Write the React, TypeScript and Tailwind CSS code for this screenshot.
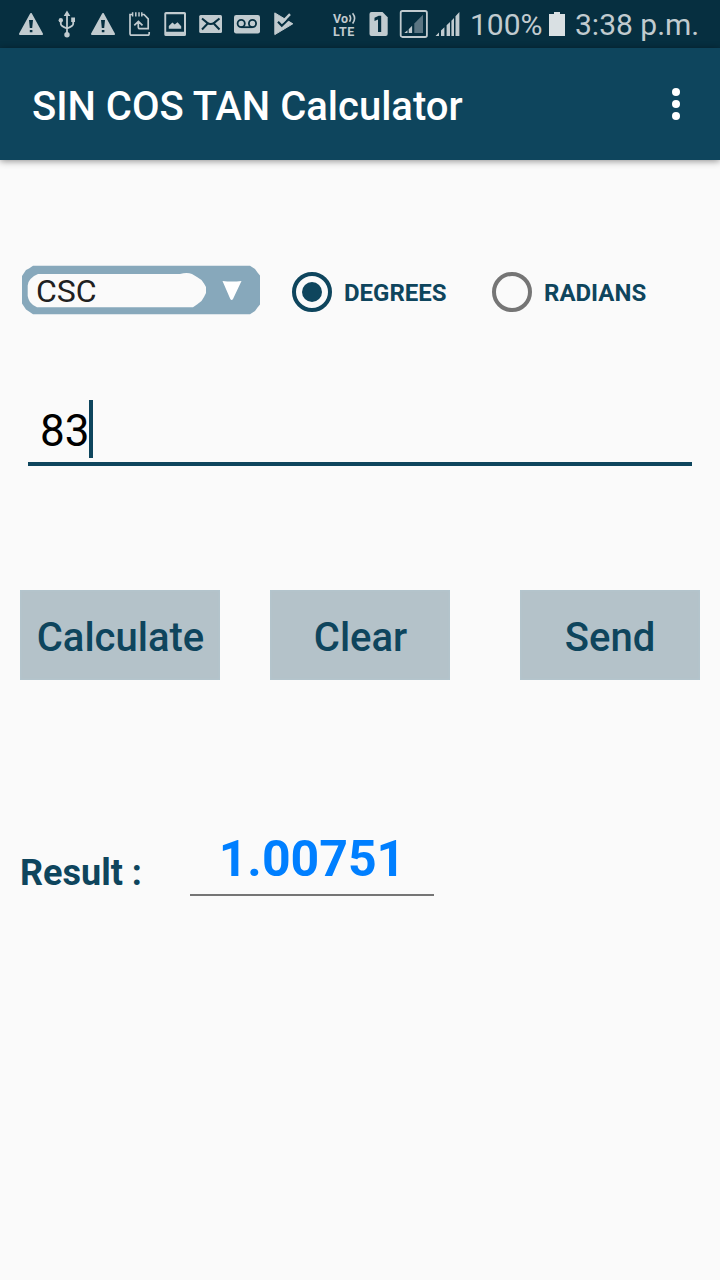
import { useState } from "react"
import type { ReactNode } from "react"

const Slot = ({ children }: { children: ReactNode }) => (
  <svg width="36" height="48" viewBox="0 0 36 48" fill="none" className="shrink-0">
    {children}
  </svg>
)

const WarningIcon = () => (
  <Slot>
    <path d="M18 14 L29 34 H7 Z" fill="#c1cbcf" stroke="#c1cbcf" strokeWidth="2" strokeLinejoin="round" />
    <path d="M16 20 H20 L19.2 28 H16.8 Z M16.8 30 H19.4 V32.2 H16.8 Z" fill="#062f40" />
  </Slot>
)

const UsbIcon = () => (
  <Slot>
    <path d="M18 13 V34 M11.8 20 V24 Q11.8 26 18 28.5 M24.2 20 V24 Q24.2 26 18 28.5" stroke="#c1cbcf" strokeWidth="1.8" />
    <path d="M18 10.5 L21.3 16 H14.7 Z M22.2 17.6 H26 V22 H22.2 Z" fill="#c1cbcf" />
    <circle cx="11.8" cy="20.2" r="2.2" fill="#c1cbcf" />
    <circle cx="18" cy="34.8" r="2.7" fill="#c1cbcf" />
  </Slot>
)

const SdCardIcon = () => (
  <Slot>
    <path
      d="M11 14.5 H9 V33.5 Q9 35.2 10.7 35.2 H26.5 Q28.2 35.2 28.2 33.5 V32 M21 14.5 H23 L27.2 18.8 V28.7 H19 Q17.3 28.7 17.3 27 V22 M13.3 25.4 L17.4 21.4 L21.5 25.4"
      stroke="#c1cbcf"
      strokeWidth="1.7"
    />
    <path d="M11.6 12.2 V16.6 M14.8 12.2 V16.6 M18 12.2 V16.6 M20.8 12.2 V16.6" stroke="#c1cbcf" strokeWidth="1.5" />
  </Slot>
)

const PictureIcon = () => (
  <Slot>
    <path fillRule="evenodd" d="M9 12 H27.5 Q29 12 29 13.5 V34.5 Q29 36 27.5 36 H9 Q7.3 36 7.3 34.5 V13.5 Q7.3 12 9 12 Z M9.2 14.2 V31.7 H27 V14.2 Z" fill="#c1cbcf" />
    <path d="M11.8 28.7 V26 L15.4 22.5 L17.7 24.5 L20.5 22.3 L24.2 26.2 V28.7 Z" fill="#c1cbcf" />
  </Slot>
)

const MailIcon = () => (
  <Slot>
    <rect x="6.2" y="15" width="22.8" height="18" rx="1.5" fill="#c1cbcf" />
    <path d="M9 18.5 L14 22.6 Q17.7 25.4 21.4 22.6 L26.5 18.5 M9 29.5 L14.5 23.8 M26.5 29.5 L21 23.8" stroke="#062f40" strokeWidth="2" />
  </Slot>
)

const VoicemailIcon = () => (
  <Slot>
    <rect x="5" y="15" width="26" height="18.5" rx="2.2" fill="#c1cbcf" />
    <circle cx="12.2" cy="23.5" r="3.6" stroke="#062f40" strokeWidth="1.8" />
    <circle cx="23.5" cy="23.5" r="3.6" stroke="#062f40" strokeWidth="1.8" />
    <path d="M12.2 27.2 H23.5" stroke="#062f40" strokeWidth="1.8" />
  </Slot>
)

const PlayCheckIcon = () => (
  <Slot>
    <path d="M9.8 12.9 L27.8 23.8 L9.8 34.6 Z" fill="#c1cbcf" stroke="#c1cbcf" strokeWidth="1" strokeLinejoin="round" />
    <path d="M13 21.8 L16.8 25.8 L26 16.8" stroke="#062f40" strokeWidth="2.2" />
    <path d="M16.8 22.6 L25 14.2" stroke="#c1cbcf" strokeWidth="2.4" />
  </Slot>
)

const VolteIcon = () => (
  <div className="ml-[32px] flex h-12 w-[26px] shrink-0 flex-col pt-[12px]">
    <div className="flex h-[13px] items-start">
      <span className="w-[15px] text-[12.5px] leading-[13px] font-bold">Vo</span>
      <svg width="9" height="12" viewBox="0 0 9 12" fill="none" className="shrink-0">
        <path d="M1.5 3 Q3.7 6.3 1.5 9.8 M4.6 1.2 Q8.6 6.3 4.6 11.6" stroke="#c1cbcf" strokeWidth="1.6" />
      </svg>
    </div>
    <span className="text-[12.5px] leading-[13px] font-bold tracking-[0.6px] whitespace-nowrap">LTE</span>
  </div>
)

const SimIcon = () => (
  <svg width="20" height="48" viewBox="0 0 20 48" className="ml-[10px] shrink-0">
    <path d="M2.5 12 H13.5 L18.7 17.2 V34 Q18.7 36 16.7 36 H2.5 Q.5 36 .5 34 V14 Q.5 12 2.5 12 Z" fill="#c1cbcf" />
    <path d="M5.5 17.8 L9.7 15.8 H12.2 V32 H9 V19.6 L5.5 21 Z" fill="#062f40" />
  </svg>
)

const BoxedSignalIcon = () => (
  <svg width="30" height="48" viewBox="0 0 30 48" className="ml-[10px] shrink-0">
    <rect x="1.7" y="11" width="26.2" height="26" rx="1.8" fill="none" stroke="#c1cbcf" strokeWidth="1.8" />
    <path d="M15.3 23.5 L24 14.8 V33 H15.3 Z" fill="#5b7582" />
    <path d="M5.3 33 L8.5 30.2 V33 Z M9.7 29.2 L13.1 25.8 V33 H9.7 Z" fill="#c1cbcf" />
  </svg>
)

const SignalIcon = () => (
  <svg width="26" height="48" viewBox="0 0 26 48" className="ml-[6px] shrink-0">
    <path
      d="M.5 36 L4 32.5 V36 Z M6 30.5 L9.4 27.2 V36 H6 Z M11.6 25.3 L15 22 V36 H11.6 Z M16.4 20.7 V36 H19 V18.1 Z M20.5 16.3 L24.4 12 V36 H20.5 Z"
      fill="#c1cbcf"
    />
  </svg>
)

const StatusBar = () => (
  <div className="flex h-12 items-center bg-[#062f40] pl-[13px] text-[30px] leading-none text-[#c1cbcf]">
    <WarningIcon />
    <UsbIcon />
    <WarningIcon />
    <SdCardIcon />
    <PictureIcon />
    <MailIcon />
    <VoicemailIcon />
    <PlayCheckIcon />
    <VolteIcon />
    <SimIcon />
    <BoxedSignalIcon />
    <SignalIcon />
    <span className="ml-[9px] w-[78px] pt-[2px] whitespace-nowrap">100%</span>
    <svg width="16" height="48" viewBox="0 0 16 48" className="ml-px shrink-0">
      <path d="M5 12 H11 V14 H16 V36 H0 V14 H5 Z" fill="#d9e0e3" />
    </svg>
    <span className="ml-[10px] pt-[2px] whitespace-nowrap">3:38 p.m.</span>
  </div>
)

type RadioProps = {
  label: string
  checked: boolean
  onSelect: () => void
}

const Radio = ({ label, checked, onSelect }: RadioProps) => (
  <button role="radio" aria-checked={checked} onClick={onSelect} className="flex w-[200px] items-center gap-3">
    <span
      className={`flex h-10 w-10 shrink-0 items-center justify-center rounded-full border-4 ${
        checked ? "border-[#0e455d]" : "border-[#757575]"
      }`}
    >
      {checked && <span className="h-5 w-5 rounded-full bg-[#0e455d]" />}
    </span>
    <span className="pt-[2px] text-[24px] leading-none font-bold text-[#0e455d]">{label}</span>
  </button>
)

const buttonClass =
  "h-[90px] bg-[#b4c2c9] pt-[5px] text-[40px] leading-none font-medium text-[#0e455d] shadow-[inset_0_0_3px_#b2c8d2]"

export default function App() {
  const [unit, setUnit] = useState("DEGREES")
  const [value, setValue] = useState("83")

  return (
    <div className="flex h-[1280px] w-[720px] flex-col overflow-hidden bg-[#fafafa] font-[Roboto,sans-serif]">
      <StatusBar />
      <header className="flex h-28 shrink-0 items-center justify-between bg-[#0e455d] pr-10 pl-8 shadow-[0_1px_7px_rgba(0,0,0,0.45)]">
        <h1 className="pt-[5px] text-[40px] leading-none font-medium text-white">SIN COS TAN Calculator</h1>
        <svg width="8" height="32" viewBox="0 0 8 32" fill="#fff">
          <circle cx="4" cy="4" r="4" />
          <circle cx="4" cy="16" r="4" />
          <circle cx="4" cy="28" r="4" />
        </svg>
      </header>

      <main className="flex flex-col">
        <div className="mt-[105px] ml-[22px] flex h-[50px] items-center">
          {/* Function picker */}
          <button className="relative h-[50px] w-[238px] text-left">
            <svg width="238" height="50" viewBox="0 0 238 50" className="absolute inset-0">
              <path d="M11 .8 H228 L233 4 L235.5 7.5 L238 10.5 V39.5 L235.5 42.5 L233 46 L228 49.2 H11 L7 46.5 L4 44.5 L2 41.5 L0 38.5 V11 L2 8 L4 5 L7 3.5 Z" fill="#87a8bb" />
              <path d="M16 9 H158 Q165 7 170 9 L175 12 L179.5 15 L182 18.5 L184 22 V28 L182 32 L179.5 36 L175 39.5 L171 42.3 H15 L11 40 L8 37 L6.5 34 L5.7 31 V20.5 L6.5 17 L8.5 14 L12 11 Z" fill="#fafafa" />
              <path d="M200.5 16 Q210 17 219.5 16 L211 34 Q209.7 36 208.3 34 Z" fill="#fff" />
            </svg>
            <span className="relative top-[2px] ml-[14px] text-[32px] leading-none text-[#212121]">CSC</span>
          </button>
          <div role="radiogroup" className="mt-[4px] ml-8 flex">
            <Radio label="DEGREES" checked={unit === "DEGREES"} onSelect={() => setUnit("DEGREES")} />
            <Radio label="RADIANS" checked={unit === "RADIANS"} onSelect={() => setUnit("RADIANS")} />
          </div>
        </div>

        <div className="mx-7 mt-[85px] flex h-[66px] border-b-4 border-[#0e455d] pl-3">
          <span className="pt-[9px] text-[44px] leading-none text-black">{value}</span>
          <span className="h-[58px] w-1 bg-[#0e455d]" />
        </div>

        <div className="mx-5 mt-[124px] flex">
          <button className={`${buttonClass} w-[200px] pl-px`}>Calculate</button>
          <button className={`${buttonClass} ml-[50px] w-[180px] pl-px`} onClick={() => setValue("")}>
            Clear
          </button>
          <button className={`${buttonClass} ml-[70px] w-[180px]`}>Send</button>
        </div>

        <div className="mt-[146px] ml-5 flex h-[70px]">
          <span className="w-[170px] pt-[29px] text-[36px] leading-none font-bold text-[#0e455d]">Result :</span>
          <div className="w-[244px] border-b-2 border-[#757575] pt-[8px] text-center text-[50px] leading-none font-bold text-[#007fff]">
            1.00751
          </div>
        </div>
      </main>
    </div>
  )
}
